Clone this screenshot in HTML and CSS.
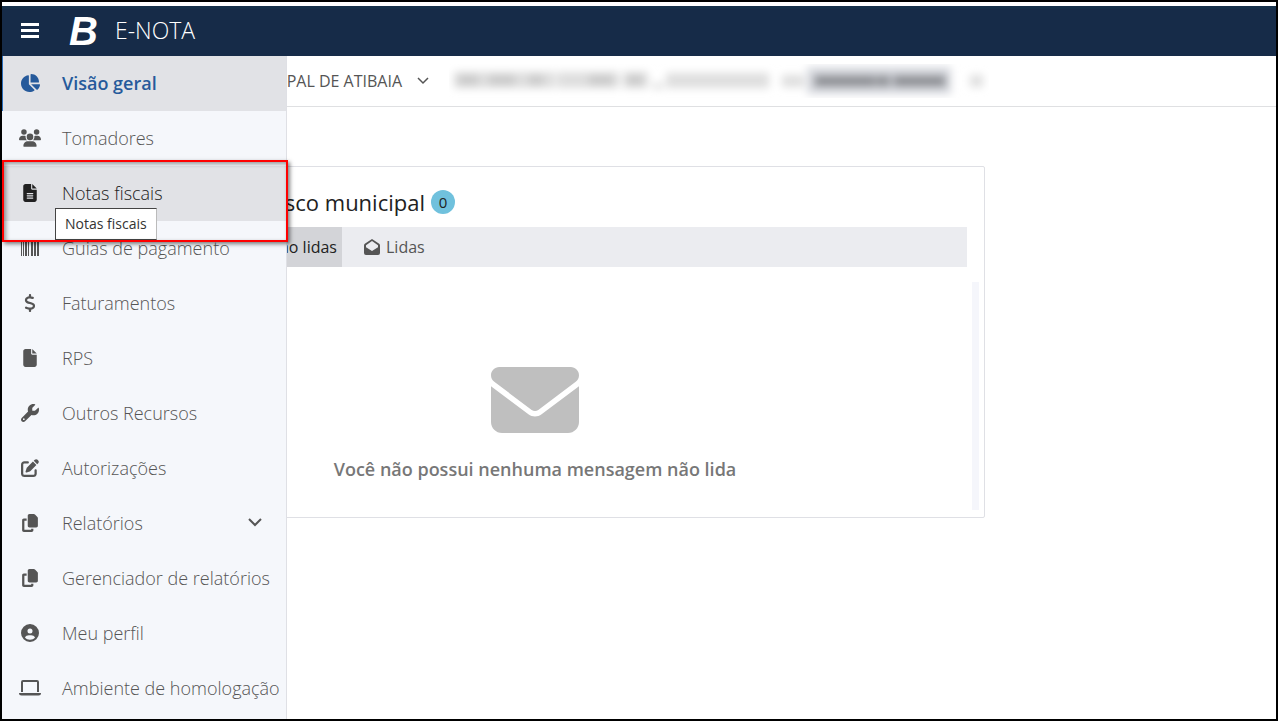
FILE: index.html
```html
<!DOCTYPE html>
<html lang="pt-BR">
<head>
  <meta charset="UTF-8" />
  <meta name="viewport" content="width=device-width, initial-scale=1.0" />
  <title>E-NOTA</title>
  <link rel="stylesheet" href="styles.css">
</head>
<body>
  <header class="topbar">
    <button class="menu-btn" type="button" aria-label="Menu">
      <svg width="18" height="16" viewBox="0 0 18 16"><path d="M0 0h18v3H0zM0 6h18v3H0zM0 12h18v3H0z"/></svg>
    </button>
    <span class="logo">B</span>
    <span class="app-name">E-NOTA</span>
  </header>

  <div class="layout">
    <!-- Menu lateral aberto sobre o conteúdo -->
    <nav class="sidebar">
      <a class="item active" href="#">
        <svg class="icon" viewBox="0 0 576 512"><path d="M304 240V16.6c0-9 7-16.6 16-16.6C443.7 0 544 100.3 544 224c0 9-7.6 16-16.6 16H304zM32 272C32 150.7 122.1 50.3 239 34.3c9.2-1.3 17 6.1 17 15.4V288L412.5 444.5c6.7 6.7 6.2 17.7-1.5 23.1C371.8 495.6 323.8 512 272 512C139.5 512 32 404.6 32 272zm526.4 16c9.3 0 16.6 7.8 15.4 17c-7.7 55.9-34.6 105.6-73.9 142.3c-6 5.6-15.4 5.2-21.2-.7L320 288H558.4z"/></svg>
        <span>Visão geral</span>
      </a>
      <a class="item" href="#">
        <svg class="icon" viewBox="0 0 640 512"><path d="M144 0a80 80 0 1 1 0 160A80 80 0 1 1 144 0zM512 0a80 80 0 1 1 0 160A80 80 0 1 1 512 0zM0 298.7C0 239.8 47.8 192 106.7 192h42.7c15.9 0 31 3.5 44.6 9.7c-1.3 7.2-1.9 14.7-1.9 22.3c0 38.2 16.8 72.5 43.3 96c-.2 0-.4 0-.7 0H21.3C9.6 320 0 310.4 0 298.7zM405.3 320c-.2 0-.4 0-.7 0c26.6-23.5 43.3-57.8 43.3-96c0-7.6-.7-15-1.9-22.3c13.6-6.3 28.7-9.7 44.6-9.7h42.7C592.2 192 640 239.8 640 298.7c0 11.8-9.6 21.3-21.3 21.3H405.3zM224 224a96 96 0 1 1 192 0 96 96 0 1 1 -192 0zM128 485.3C128 411.7 187.7 352 261.3 352H378.7C452.3 352 512 411.7 512 485.3c0 14.7-11.9 26.7-26.7 26.7H154.7c-14.7 0-26.7-11.9-26.7-26.7z"/></svg>
        <span>Tomadores</span>
      </a>
      <a class="item hovered" href="#">
        <svg class="icon" viewBox="0 0 384 512"><path fill-rule="evenodd" d="M64 0C28.7 0 0 28.7 0 64V448c0 35.3 28.7 64 64 64H320c35.3 0 64-28.7 64-64V160H256c-17.7 0-32-14.3-32-32V0H64zM256 0V128H384L256 0zM112 256H272c8.8 0 16 7.2 16 16s-7.2 16-16 16H112c-8.8 0-16-7.2-16-16s7.2-16 16-16zm0 64H272c8.8 0 16 7.2 16 16s-7.2 16-16 16H112c-8.8 0-16-7.2-16-16s7.2-16 16-16zm0 64H272c8.8 0 16 7.2 16 16s-7.2 16-16 16H112c-8.8 0-16-7.2-16-16s7.2-16 16-16z"/></svg>
        <span>Notas fiscais</span>
        <span class="tooltip" role="tooltip">Notas fiscais</span>
      </a>
      <a class="item" href="#">
        <svg class="icon" viewBox="0 0 18 18"><path d="M0 1h1v16H0zM2 1h1v16H2zM4 1h2v16H4zM7 1h1v16H7zM10 1h2v16h-2zM13 1h2v16h-2zM16 1h2v16h-2z"/></svg>
        <span>Guias de pagamento</span>
      </a>
      <a class="item" href="#">
        <svg class="icon" viewBox="0 0 320 512"><path d="M160 0c17.7 0 32 14.3 32 32V67.7c1.6 .2 3.1 .4 4.7 .7c.4 .1 .7 .1 1.1 .2l48 8.8c17.4 3.2 28.9 19.9 25.7 37.2s-19.9 28.9-37.2 25.7l-47.5-8.7c-31.3-4.6-58.9-1.5-78.3 6.2s-27.2 18.3-29 28.1c-2 10.7-.5 16.7 1.2 20.4c1.8 3.9 5.5 8.3 12.8 13.2c16.3 10.7 41.3 17.7 73.7 26.3l2.9 .8c28.6 7.6 63.6 16.8 89.6 33.8c14.2 9.3 27.6 21.9 35.9 39.5c8.5 17.9 10.3 37.9 6.4 59.2c-6.9 38-33.1 63.4-65.6 76.7c-13.7 5.6-28.6 9.2-44.4 11V480c0 17.7-14.3 32-32 32s-32-14.3-32-32V445.1c-.4-.1-.9-.1-1.3-.2l-.2 0c-24.4-3.8-64.5-14.3-91.5-26.3c-16.1-7.2-23.4-26.1-16.2-42.2s26.1-23.4 42.2-16.2c20.9 9.3 55.3 18.5 75.2 21.6c31.9 4.7 58.2 2 76-5.3c16.9-6.9 24.6-16.9 26.8-28.9c1.9-10.6 .4-16.7-1.3-20.4c-1.9-4-5.6-8.4-13-13.3c-16.4-10.7-41.5-17.7-74-26.3l-2.8-.7C119.4 279.3 84.4 270 58.4 253c-14.2-9.3-27.5-22-35.8-39.6c-8.4-17.9-10.1-37.9-6.1-59.2C23.7 116 52.3 91.2 84.8 78.3c13.3-5.3 27.9-8.9 43.2-11V32c0-17.7 14.3-32 32-32z"/></svg>
        <span>Faturamentos</span>
      </a>
      <a class="item" href="#">
        <svg class="icon" viewBox="0 0 384 512"><path d="M0 64C0 28.7 28.7 0 64 0H224V128c0 17.7 14.3 32 32 32H384V448c0 35.3-28.7 64-64 64H64c-35.3 0-64-28.7-64-64V64zM384 128H256V0L384 128z"/></svg>
        <span>RPS</span>
      </a>
      <a class="item" href="#">
        <svg class="icon" viewBox="0 0 512 512"><path fill-rule="evenodd" d="M352 320c88.4 0 160-71.6 160-160c0-15.3-2.2-30.1-6.2-44.2c-3.1-10.8-16.4-13.2-24.3-5.3l-76.8 76.8c-3 3-7.1 4.7-11.3 4.7H336c-8.8 0-16-7.2-16-16V118.6c0-4.2 1.7-8.3 4.7-11.3l76.8-76.8c7.9-7.9 5.4-21.2-5.3-24.3C382.1 2.2 367.3 0 352 0C263.6 0 192 71.6 192 160c0 19.1 3.4 37.5 9.5 54.5L19.9 396.1C7.2 408.8 0 426.1 0 444.1C0 481.6 30.4 512 67.9 512c18 0 35.3-7.2 48-19.9L297.5 310.5c17 6.2 35.4 9.5 54.5 9.5zM80 408a24 24 0 1 1 0 48 24 24 0 1 1 0-48z"/></svg>
        <span>Outros Recursos</span>
      </a>
      <a class="item" href="#">
        <svg class="icon" viewBox="0 0 512 512"><path d="M471.6 21.7c-21.9-21.9-57.3-21.9-79.2 0L362.3 51.7l97.9 97.9 30.1-30.1c21.9-21.9 21.9-57.3 0-79.2L471.6 21.7zm-299.2 220c-6.1 6.1-10.8 13.6-13.5 21.9l-29.6 88.8c-2.9 8.6-.6 18.1 5.8 24.6s15.9 8.7 24.6 5.8l88.8-29.6c8.2-2.7 15.7-7.4 21.9-13.5L437.7 172.3 339.7 74.3 172.4 241.7zM96 64C43 64 0 107 0 160V416c0 53 43 96 96 96H352c53 0 96-43 96-96V320c0-17.7-14.3-32-32-32s-32 14.3-32 32v96c0 17.7-14.3 32-32 32H96c-17.7 0-32-14.3-32-32V160c0-17.7 14.3-32 32-32h96c17.7 0 32-14.3 32-32s-14.3-32-32-32H96z"/></svg>
        <span>Autorizações</span>
      </a>
      <a class="item" href="#">
        <svg class="icon" viewBox="0 0 448 512"><path d="M208 0H332.1c12.7 0 24.9 5.1 33.9 14.1l67.9 67.9c9 9 14.1 21.2 14.1 33.9V336c0 26.5-21.5 48-48 48H208c-26.5 0-48-21.5-48-48V48c0-26.5 21.5-48 48-48zM48 128h80v64H64V448H256V416h64v48c0 26.5-21.5 48-48 48H48c-26.5 0-48-21.5-48-48V176c0-26.5 21.5-48 48-48z"/></svg>
        <span>Relatórios</span>
        <svg class="arrow" width="14" height="9" viewBox="0 0 14 9"><path d="M1 1l6 6 6-6"/></svg>
      </a>
      <a class="item" href="#">
        <svg class="icon" viewBox="0 0 448 512"><path d="M208 0H332.1c12.7 0 24.9 5.1 33.9 14.1l67.9 67.9c9 9 14.1 21.2 14.1 33.9V336c0 26.5-21.5 48-48 48H208c-26.5 0-48-21.5-48-48V48c0-26.5 21.5-48 48-48zM48 128h80v64H64V448H256V416h64v48c0 26.5-21.5 48-48 48H48c-26.5 0-48-21.5-48-48V176c0-26.5 21.5-48 48-48z"/></svg>
        <span>Gerenciador de relatórios</span>
      </a>
      <a class="item" href="#">
        <svg class="icon" viewBox="0 0 512 512"><path fill-rule="evenodd" d="M399 384.2C376.9 345.8 335.4 320 288 320H224c-47.4 0-88.9 25.8-111 64.2c35.2 39.2 86.2 63.8 143 63.8s107.8-24.7 143-63.8zM0 256a256 256 0 1 1 512 0A256 256 0 1 1 0 256zm256 16a72 72 0 1 0 0-144 72 72 0 1 0 0 144z"/></svg>
        <span>Meu perfil</span>
      </a>
      <a class="item" href="#">
        <svg class="icon" viewBox="0 0 22 18"><path fill-rule="evenodd" d="M4 1h14a2 2 0 0 1 2 2v10H2V3a2 2 0 0 1 2-2zM4 3v10h14V3zM0 14h22a2.5 2.5 0 0 1-2.5 2.5h-17A2.5 2.5 0 0 1 0 14z"/></svg>
        <span>Ambiente de homologação</span>
      </a>
      <div class="highlight"></div>
    </nav>

    <main class="content">
      <div class="context">
        <button class="entity" type="button">
          <span>PREFEITURA MUNICIPAL DE ATIBAIA</span>
          <svg class="arrow" width="12" height="8" viewBox="0 0 12 8"><path d="M1 1l5 5 5-5"/></svg>
        </button>
        <!-- Dados do contribuinte ocultados -->
        <svg class="masked" width="540" height="34" viewBox="0 0 540 34" aria-hidden="true">
          <defs><filter id="soft" x="-5%" y="-50%" width="110%" height="200%"><feGaussianBlur stdDeviation="4"/></filter></defs>
          <g filter="url(#soft)">
            <path fill="#dedede" d="M5 8h101v16H5zM108 8h62v16h-62zM174 8h25v16h-25zM204 19h10v6h-10zM217 9h103v15H217zM333 11h22v12h-22zM521 11h13v12h-13z"/>
            <path fill="#c9c9c9" d="M9 11h20v10H9zM40 11h26v10H40zM80 11h14v10H80zM140 11h24v10h-24zM178 11h16v10h-16z"/>
            <path fill="#d8dae0" d="M358 3h144v27H358z"/>
            <path fill="#8c8e93" d="M365 11h62v12h-62zM428 11h13v12h-13zM444 11h53v12h-53z"/>
          </g>
        </svg>
      </div>

      <section class="card">
        <h1 class="card-title">
          <span class="title-text">Mensagens do fisco municipal</span>
          <span class="badge">0</span>
        </h1>
        <div class="tabs" role="tablist">
          <button class="tab selected" type="button" role="tab" aria-selected="true">Não lidas</button>
          <button class="tab" type="button" role="tab" aria-selected="false">
            <svg width="16" height="16" viewBox="0 0 16 16"><path fill-rule="evenodd" d="M8 0l7.2 4.8a2 2 0 0 1 .8 1.6V14a2 2 0 0 1-2 2H2a2 2 0 0 1-2-2V6.4a2 2 0 0 1 .8-1.6zM8 2L2 6.2v2L8 12l6-3.800v-2z"/></svg>
            <span>Lidas</span>
          </button>
        </div>
        <div class="messages">
          <svg width="88" height="66" viewBox="0 64 512 384"><path d="M48 64C21.5 64 0 85.5 0 112c0 15.1 7.1 29.3 19.2 38.4L236.8 313.6c11.4 8.5 27 8.5 38.4 0L492.8 150.4c12.1-9.1 19.2-23.3 19.2-38.4c0-26.5-21.5-48-48-48H48zM0 176V384c0 35.3 28.7 64 64 64H448c35.3 0 64-28.7 64-64V176L294.4 339.2c-22.8 17.1-54 17.1-76.8 0L0 176z"/></svg>
          <p>Você não possui nenhuma mensagem não lida</p>
        </div>
      </section>
    </main>
  </div>
</body>
</html>
```

FILE: styles.css
```css
* {
  box-sizing: border-box;
}
body {
  display: flex;
  flex-direction: column;
  min-height: 100vh;
  margin: 0;
  padding-top: 4px;
  border: 2px solid #000;
  background-color: #fff;
  color: #555;
  font-family: 'Open Sans', sans-serif;
  font-size: 16px;
}
button {
  padding: 0;
  border: none;
  background: none;
  color: inherit;
  font: inherit;
  cursor: pointer;
}
svg {
  flex-shrink: 0;
  fill: currentColor;
}

/* Barra superior */
.topbar {
  display: flex;
  align-items: center;
  height: 50px;
  padding-left: 19px;
  background-color: #162b48;
  box-shadow: inset 0 3px #15304a;
  color: #fff;
}
.menu-btn {
  display: flex;
}
.logo {
  width: 46px;
  margin-left: 30px;
  font-family: 'Liberation Sans', sans-serif;
  font-size: 40px;
  font-weight: bold;
  font-style: italic;
  line-height: 46px;
}
.app-name {
  padding-bottom: 2px;
  font-size: 23px;
  font-weight: 350;
}

.layout {
  position: relative;
  flex: 1;
}

/* Menu lateral */
.sidebar {
  position: absolute;
  top: 0;
  bottom: 0;
  left: 0;
  width: 285px;
  border-right: 1px solid #dfe0e5;
  background-color: #f5f7fb;
}
.item {
  position: relative;
  display: flex;
  align-items: center;
  height: 55px;
  padding: 0 0 2px 17px;
  color: #555;
  font-size: 18px;
  font-weight: 350;
  text-decoration: none;
  white-space: nowrap;
}
.icon {
  width: 22px;
  height: 18px;
  margin-right: 21px;
}
.item.active {
  background-color: #e1e2e6;
  box-shadow: inset 1px 0 #2a6ebb;
  color: #265a9b;
  font-weight: 550;
}
.item.hovered {
  background-color: #e1e2e6;
  color: #212121;
}
.arrow {
  fill: none;
  stroke: currentColor;
  stroke-width: 2;
}
.item .arrow {
  margin-left: auto;
  margin-right: 24px;
}
.tooltip {
  position: absolute;
  top: 42px;
  left: 53px;
  z-index: 1;
  padding: 0 9px;
  border: 1px solid #444;
  border-right-color: #bbb;
  background-color: #fff;
  color: #333;
  font-size: 14px;
  font-weight: 400;
  line-height: 30px;
}
.highlight {
  position: absolute;
  top: 104px;
  left: 0;
  z-index: 2;
  width: 286px;
  height: 82px;
  border: 2px solid #f00;
  box-shadow: 2px 2px 4px rgba(0, 0, 0, 0.5), inset 2px 2px 4px rgba(0, 0, 0, 0.4);
  pointer-events: none;
}

/* Conteúdo */
.context {
  display: flex;
  align-items: center;
  height: 51px;
  border-bottom: 1px solid #dfe0e2;
}
.entity {
  display: flex;
  justify-content: flex-end;
  align-items: center;
  gap: 15px;
  width: 427px;
  white-space: nowrap;
}
.entity .arrow {
  stroke-width: 1.5;
}
.masked {
  margin-left: 20px;
}
.card {
  max-width: 900px;
  margin: 59px 83px;
  padding: 17px 5px 7px 17px;
  border: 1px solid #dfe0e5;
  border-radius: 2px;
}
.card-title {
  display: flex;
  align-items: center;
  gap: 6px;
  margin: 0 0 7px;
  color: #212121;
  font-size: 22px;
  font-weight: 400;
  line-height: 36px;
}
.title-text {
  width: 322px;
  text-align: right;
  white-space: nowrap;
}
.badge {
  width: 24px;
  border-radius: 12px;
  background-color: #70c1dd;
  font-size: 15px;
  line-height: 24px;
  text-align: center;
}
.tabs {
  display: flex;
  height: 40px;
  margin-right: 12px;
  background-color: #ebecf0;
}
.tab {
  display: flex;
  align-items: center;
  gap: 6px;
  padding-left: 22px;
}
.tab.selected {
  justify-content: flex-end;
  width: 239px;
  padding-right: 5px;
  background-color: #d3d4d8;
  color: #212121;
}
.messages {
  display: flex;
  flex-direction: column;
  align-items: center;
  height: 228px;
  margin-top: 15px;
  padding: 85px 5px 0 0;
  border-right: 7px solid #f5f6fb;
  color: #bfbfbf;
}
.messages p {
  margin: 24px 0;
  color: #777;
  font-size: 18px;
  font-weight: 600;
  line-height: 24px;
}
```
